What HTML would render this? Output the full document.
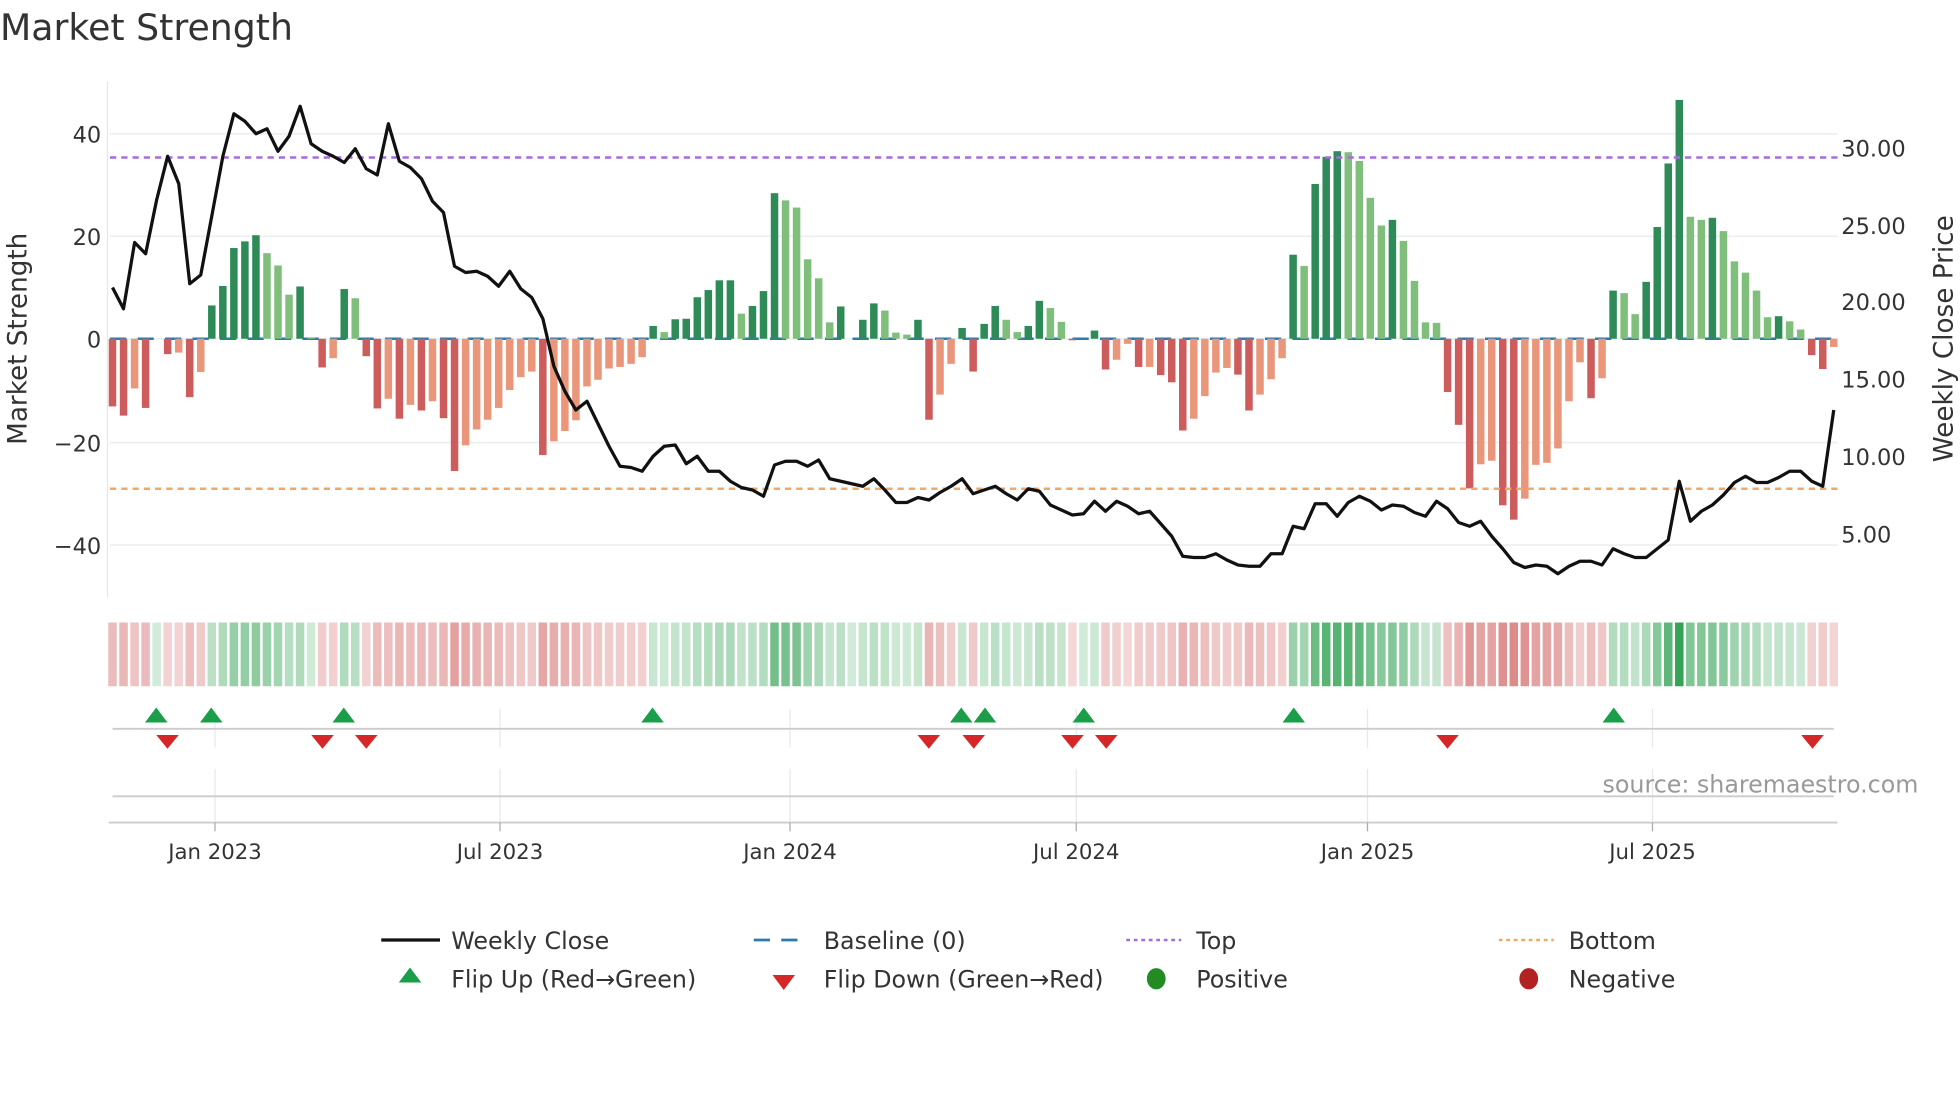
<!DOCTYPE html>
<html><head><meta charset="utf-8"><style>
html,body{margin:0;padding:0;background:#fff;width:1960px;height:1102px;overflow:hidden}
svg{display:block}
text{font-family:"DejaVu Sans","Liberation Sans",sans-serif;fill:#333}
</style></head><body>
<svg id="s" width="1960" height="1102" viewBox="0 0 1568 881.6" xmlns="http://www.w3.org/2000/svg">
<rect width="1568" height="882" fill="#fff"/>
<text x="0" y="32" font-size="29">Market Strength</text>
<g id="grid"></g>
<line x1="86" y1="65" x2="86" y2="478" stroke="#e6e6ea" stroke-width="1"/>
<g font-size="18" text-anchor="end">
<text x="81" y="114">40</text><text x="81" y="278">0</text>
<text x="81" y="196">20</text><text x="81" y="361">−20</text><text x="81" y="443">−40</text>
</g>
<g font-size="18">
<text x="1473" y="125">30.00</text><text x="1473" y="187">25.00</text><text x="1473" y="248">20.00</text>
<text x="1473" y="310">15.00</text><text x="1473" y="372">10.00</text><text x="1473" y="434">5.00</text>
</g>
<text font-size="21" transform="translate(21,271) rotate(-90)" text-anchor="middle">Market Strength</text>
<text font-size="21" transform="translate(1562,271) rotate(-90)" text-anchor="middle">Weekly Close Price</text>
<g id="bars"></g>
<line x1="88" y1="126" x2="1470" y2="126" stroke="#a66be0" stroke-width="2" stroke-dasharray="5,4"/>
<line x1="88" y1="391" x2="1470" y2="391" stroke="#f0a868" stroke-width="2" stroke-dasharray="5,4"/>
<polyline id="price" fill="none" stroke="#111" stroke-width="2.6" stroke-linejoin="round"/>
<g id="strip"></g>
<g stroke="#e8e8ec" stroke-width="1">
<line x1="172" y1="567" x2="172" y2="598"/><line x1="400" y1="567" x2="400" y2="598"/><line x1="632" y1="567" x2="632" y2="598"/><line x1="861" y1="567" x2="861" y2="598"/><line x1="1094" y1="567" x2="1094" y2="598"/><line x1="1322" y1="567" x2="1322" y2="598"/>
<line x1="172" y1="615" x2="172" y2="658"/><line x1="400" y1="615" x2="400" y2="658"/><line x1="632" y1="615" x2="632" y2="658"/><line x1="861" y1="615" x2="861" y2="658"/><line x1="1094" y1="615" x2="1094" y2="658"/><line x1="1322" y1="615" x2="1322" y2="658"/>
</g>
<line x1="90" y1="583" x2="1467" y2="583" stroke="#ccc" stroke-width="1.5"/>
<line x1="90" y1="637" x2="1467" y2="637" stroke="#ccc" stroke-width="1.5"/>
<line x1="87" y1="658" x2="1470" y2="658" stroke="#ccc" stroke-width="1.5"/>
<g stroke="#aaa" stroke-width="1"><line x1="172" y1="658" x2="172" y2="665"/><line x1="400" y1="658" x2="400" y2="665"/><line x1="632" y1="658" x2="632" y2="665"/><line x1="861" y1="658" x2="861" y2="665"/><line x1="1094" y1="658" x2="1094" y2="665"/><line x1="1322" y1="658" x2="1322" y2="665"/></g>
<g id="marks"></g>
<text x="1282" y="634" font-size="19" style="fill:#999">source: sharemaestro.com</text>
<g font-size="17" text-anchor="middle">
<text x="172" y="687">Jan 2023</text><text x="400" y="687">Jul 2023</text><text x="632" y="687">Jan 2024</text>
<text x="861" y="687">Jul 2024</text><text x="1094" y="687">Jan 2025</text><text x="1322" y="687">Jul 2025</text>
</g>
<g font-size="19">
<line x1="305" y1="752" x2="352" y2="752" stroke="#111" stroke-width="2.6"/>
<text x="361" y="759">Weekly Close</text>
<line x1="603" y1="752" x2="647" y2="752" stroke="#2b7bb0" stroke-width="2.2" stroke-dasharray="13,9"/>
<text x="659" y="759">Baseline (0)</text>
<line x1="901" y1="752" x2="945" y2="752" stroke="#a66be0" stroke-width="2" stroke-dasharray="3,3"/>
<text x="957" y="759">Top</text>
<line x1="1199" y1="752" x2="1243" y2="752" stroke="#f0a868" stroke-width="2" stroke-dasharray="3,3"/>
<text x="1255" y="759">Bottom</text>
<polygon points="328,774 337,786 319,786" fill="#1a9e4a"/>
<text x="361" y="790">Flip Up (Red→Green)</text>
<polygon points="618,780 636,780 627,792" fill="#d62728"/>
<text x="659" y="790">Flip Down (Green→Red)</text>
<ellipse cx="925" cy="783" rx="7.5" ry="8.5" fill="#228b22"/>
<text x="957" y="790">Positive</text>
<ellipse cx="1223" cy="783" rx="7.5" ry="8.5" fill="#b22222"/>
<text x="1255" y="790">Negative</text>
</g>
</svg>
<script>
var NS="http://www.w3.org/2000/svg";
function el(t,a,p){var e=document.createElementNS(NS,t);for(var k in a)e.setAttribute(k,a[k]);document.getElementById(p).appendChild(e);return e;}
[107,189,271,354,436].forEach(function(y){el("line",{x1:88,y1:y,x2:1470,y2:y,stroke:"#eceef3","stroke-width":1.3},"grid");});
var V="-13.2d,-15d,-9.7l,-13.5d,0l,-3d,-2.7l,-11.4d,-6.5l,6.5d,10.3d,17.7d,19d,20.2d,16.7l,14.3l,8.6l,10.2d,0.2l,-5.6d,-3.8l,9.7d,7.9l,-3.4d,-13.6d,-11.7l,-15.6d,-12.9l,-14d,-12.2l,-15.5d,-25.8d,-20.8l,-17.7l,-15.8l,-13.5l,-10l,-7.5l,-6.4l,-22.7d,-20l,-18l,-15.9l,-9.3l,-8l,-5.8l,-5.5l,-4.9l,-3.6l,2.5d,1.3l,3.8d,3.9d,8.1d,9.5d,11.4d,11.4d,4.9l,6.4d,9.3d,28.4d,27l,25.6l,15.5l,11.8l,3.2l,6.3d,0l,3.7d,6.9d,5.5l,1.2l,0.8l,3.7d,-15.8d,-10.9l,-4.9l,2.1d,-6.4d,2.9d,6.4d,3.7l,1.3l,2.5d,7.4d,6l,3.3l,-0.3d,0l,1.6d,-6d,-4.1l,-1l,-5.5d,-5.5l,-7.1d,-8.5d,-17.9d,-15.6l,-11.2l,-6.6l,-5.7l,-7d,-14d,-10.9l,-7.9l,-3.8l,16.4d,14.2l,30.2d,35.5d,36.6d,36.4l,34.7l,27.5l,22.1l,23.2d,19.1l,11.3l,3.2l,3.1l,-10.4d,-16.8d,-29.2d,-24.5l,-23.8l,-32.5d,-35.3d,-31.2l,-24.6l,-24.2l,-21.4l,-12.2l,-4.6l,-11.6d,-7.7l,9.4d,8.9l,4.8l,11.1d,21.8d,34.2d,46.6d,23.8l,23.2l,23.6d,21l,15.1l,12.9l,9.4l,4.2l,4.4d,3.4l,1.8l,-3.2d,-5.9d,-1.6l".split(",");
var P=[230,247,194,203,160,125,147,227,220,173,125,91,97,107,103,121,109,85,115,121,125,130,119,135,140,99,129,134,143,161,170,213,218,217,221,229,217,231,238,255,293,313,328,321,339,357,373,374,377,365,357,356,371,365,377,377,385,390,392,397,372,369,369,373,368,383,385,387,389,383,392,402,402,398,400,394,389,383,395,392,389,395,400,391,393,404,408,412,411,401,409,401,405,411,409,419,429,445,446,446,443,448,452,453,453,443,443,421,423,403,403,413,402,397,401,408,404,405,410,413,401,407,418,421,417,429,439,450,454,452,453,459,453,449,449,452,439,443,446,446,439,432,385,417,409,404,396,386,381,386,386,382,377,377,385,389,328];
var sp=8.827,x0=90,k=4.1,z=271,w=6;
el("line",{x1:88,y1:z,x2:1470,y2:z,stroke:"#2b7bb0","stroke-width":2,"stroke-dasharray":"13,9"},"bars");
V.forEach(function(s,i){
 var d=s.slice(-1)=="d",v=parseFloat(s),x=x0+i*sp;
 var col=v>=0?(d?"#2e8b57":"#7fbf7b"):(d?"#cd5c5c":"#e9967a");
 if(Math.abs(v)>0.05){var h=Math.abs(v)*k;el("rect",{x:x-w/2,y:v>=0?z-h:z,width:w,height:h,fill:col},"bars");}
 var a=Math.min(1,Math.abs(v)/47);
 var c=v>=0?"rgba(46,160,80,"+(0.22+0.75*a)+")":"rgba(205,80,80,"+(0.22+0.6*a)+")";
 el("rect",{x:x-3.4,y:498,width:6.8,height:51,fill:c},"strip");
});
document.getElementById("price").setAttribute("points",P.map(function(y,i){return (x0+i*sp).toFixed(1)+","+y;}).join(" "));
[125,169,275,522,769,788,867,1035,1291].forEach(function(x){el("polygon",{points:x+",566 "+(x+9)+",578 "+(x-9)+",578",fill:"#1a9e4a"},"marks");});
[134,258,293,743,779,858,885,1158,1450].forEach(function(x){el("polygon",{points:(x-9)+",588 "+(x+9)+",588 "+x+",599",fill:"#d62728"},"marks");});
</script>
</body></html>
